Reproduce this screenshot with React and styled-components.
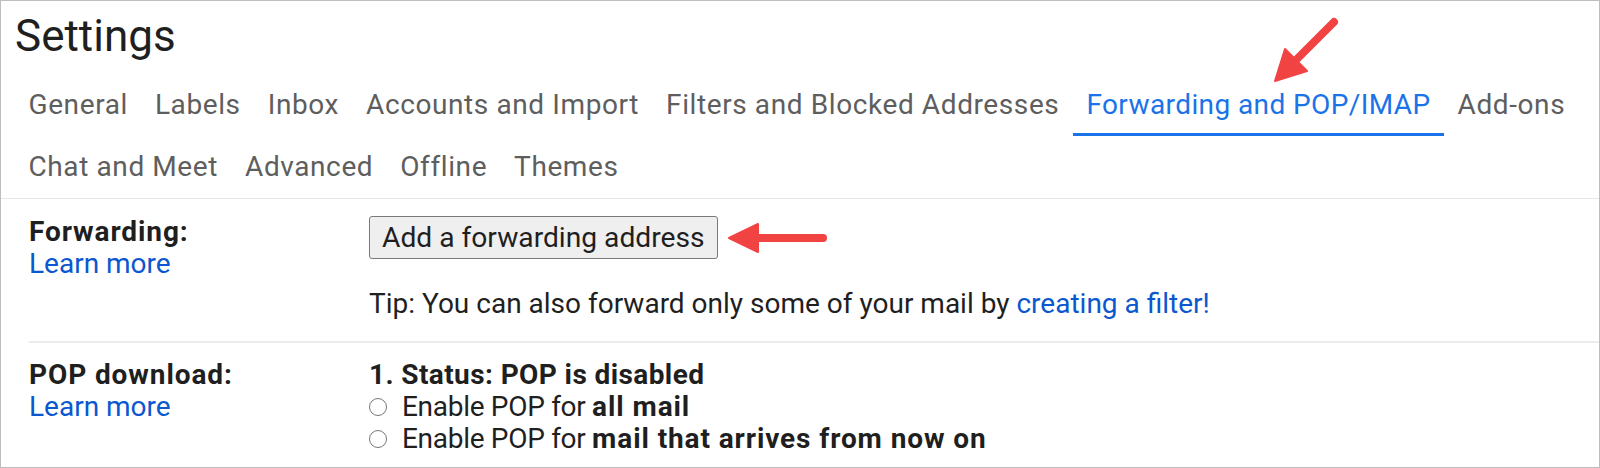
import React from 'react';
import styled, { createGlobalStyle } from 'styled-components';

const GlobalStyle = createGlobalStyle`
  html, body {
    margin: 0;
    padding: 0;
    background: #ffffff;
  }
  body {
    font-family: Roboto, "Liberation Sans", Arial, sans-serif;
    color: #1f1f1f;
  }
  * {
    box-sizing: border-box;
  }
`;

const Frame = styled.div`
  position: relative;
  width: 1600px;
  height: 468px;
  border: 1px solid #bdbdbd;
  background: #ffffff;
  overflow: hidden;
`;

const Header = styled.header`
  padding: 9px 14px 0;
`;

const Title = styled.h1`
  margin: 0;
  font-size: 44px;
  line-height: 52px;
  font-weight: 400;
  color: #1f1f1f;
`;

const TabBar = styled.nav`
  margin-top: 12px;
  padding-left: 14px;
  border-bottom: 1px solid #e6e6e6;
`;

const TabRow = styled.div`
  display: flex;
`;

const Tab = styled.div`
  padding: 15px 13.5px 12px;
  font-size: 28px;
  line-height: 32px;
  letter-spacing: ${(p) => (p.$active ? '0.4px' : '0.6px')};
  white-space: nowrap;
  color: ${(p) => (p.$active ? '#1a73e8' : '#5e5e5e')};
  border-bottom: 3px solid ${(p) => (p.$active ? '#1a73e8' : 'transparent')};
  cursor: pointer;
`;

const Content = styled.main`
  padding-left: 28px;
`;

const Section = styled.section`
  display: grid;
  grid-template-columns: 340px 1fr;
  padding: ${(p) => (p.$last ? '16px 0 0' : '17px 0 21px')};
  border-bottom: ${(p) => (p.$last ? 'none' : '2px solid #ececec')};
  font-size: 28px;
  line-height: 32px;
`;

const LabelCol = styled.div`
  display: flex;
  flex-direction: column;
  align-items: flex-start;
`;

const LabelTitle = styled.span`
  font-weight: 700;
  letter-spacing: 0.9px;
  color: #1f1f1f;
`;

const Link = styled.a`
  color: #0b57d0;
  text-decoration: none;
  cursor: pointer;
`;

const BodyCol = styled.div`
  display: flex;
  flex-direction: column;
  align-items: flex-start;
`;

const Button = styled.button`
  height: 43px;
  padding: 0 12px;
  font-family: inherit;
  font-size: 28.2px;
  line-height: 32px;
  color: #1f1f1f;
  background: #efefef;
  border: 1px solid #7a7a7a;
  border-radius: 3px;
  cursor: pointer;
`;

const Tip = styled.p`
  margin: 29px 0 0;
  color: #1f1f1f;
`;

const Status = styled.div`
  font-weight: 700;
  letter-spacing: 0.4px;
`;

const Option = styled.label`
  display: flex;
  align-items: center;
  gap: 15px;
  letter-spacing: -0.3px;
  cursor: pointer;
`;

const Strong = styled.b`
  font-weight: 700;
  letter-spacing: 0.9px;
`;

const Radio = styled.input.attrs({ type: 'radio' })`
  appearance: none;
  width: 18px;
  height: 18px;
  margin: 0;
  border: 1.5px solid #777777;
  border-radius: 50%;
  background: #ffffff;
`;

const Annotations = styled.svg`
  position: absolute;
  left: 0;
  top: 0;
  pointer-events: none;
`;

const rowOne = ['General', 'Labels', 'Inbox', 'Accounts and Import', 'Filters and Blocked Addresses', 'Forwarding and POP/IMAP', 'Add-ons'];
const rowTwo = ['Chat and Meet', 'Advanced', 'Offline', 'Themes'];
const activeTab = 'Forwarding and POP/IMAP';

export default function App() {
  return (
    <>
      <GlobalStyle />
      <Frame>
        <Header>
          <Title>Settings</Title>
        </Header>
        <TabBar>
          {[rowOne, rowTwo].map((row, i) => (
            <TabRow key={i}>
              {row.map((name) => (
                <Tab key={name} $active={name === activeTab}>
                  {name}
                </Tab>
              ))}
            </TabRow>
          ))}
        </TabBar>
        <Content>
          <Section>
            <LabelCol>
              <LabelTitle>Forwarding:</LabelTitle>
              <Link>Learn more</Link>
            </LabelCol>
            <BodyCol>
              <Button>Add a forwarding address</Button>
              <Tip>
                Tip: You can also forward only some of your mail by <Link>creating a filter!</Link>
              </Tip>
            </BodyCol>
          </Section>
          <Section $last>
            <LabelCol>
              <LabelTitle>POP download:</LabelTitle>
              <Link>Learn more</Link>
            </LabelCol>
            <BodyCol>
              <Status>1. Status: POP is disabled</Status>
              <Option>
                <Radio name="pop" />
                <span>
                  Enable POP for <Strong>all mail</Strong>
                </span>
              </Option>
              <Option>
                <Radio name="pop" />
                <span>
                  Enable POP for <Strong>mail that arrives from now on</Strong>
                </span>
              </Option>
            </BodyCol>
          </Section>
        </Content>
        <Annotations width="1600" height="468" viewBox="0 0 1600 468">
          <g fill="#f24343" stroke="#f24343" strokeLinecap="round" strokeLinejoin="round">
            <line x1="1333" y1="21" x2="1292" y2="62" strokeWidth="8" />
            <polygon points="1274,80 1284,48 1306,70" strokeWidth="2" />
            <line x1="822" y1="237" x2="752" y2="237" strokeWidth="8" />
            <polygon points="728,237 757,223 757,251" strokeWidth="2" />
          </g>
        </Annotations>
      </Frame>
    </>
  );
}
